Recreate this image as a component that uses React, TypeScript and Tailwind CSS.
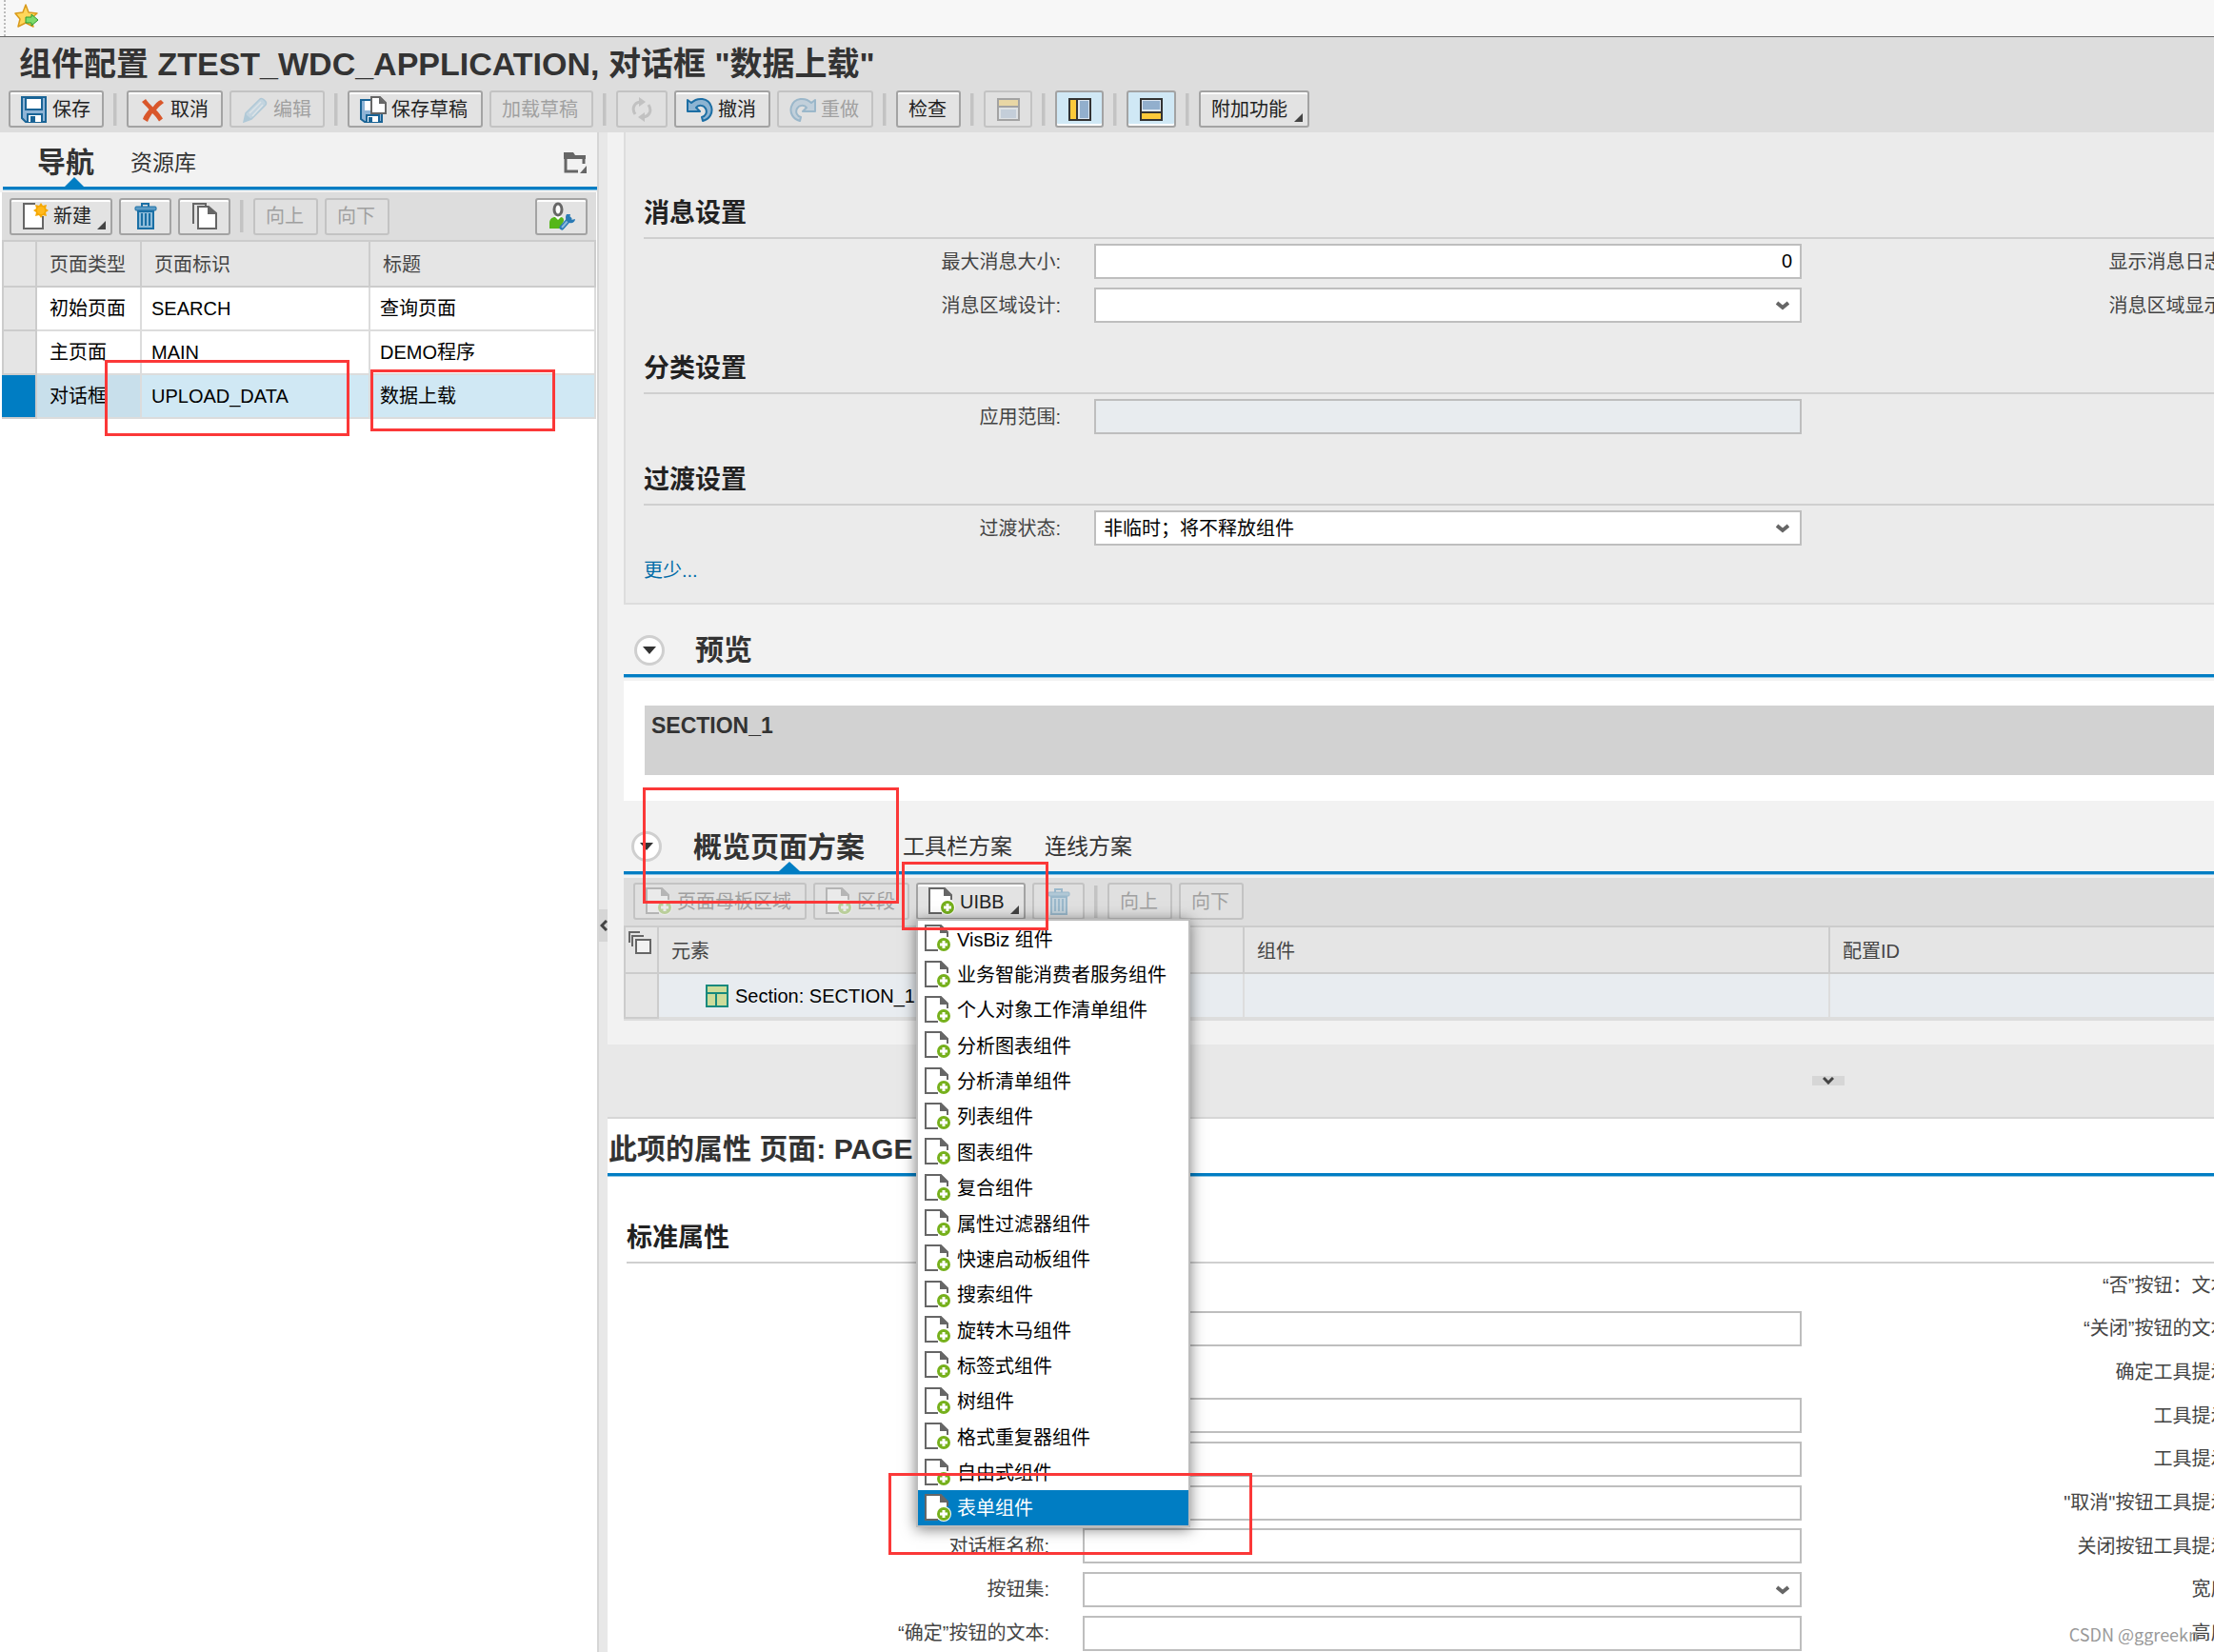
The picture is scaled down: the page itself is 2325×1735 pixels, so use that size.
import type { ReactNode } from "react";
import clsx from "clsx";

type IconProps = { className?: string };

function SaveIcon() {
  return (
    <svg width="28" height="28" viewBox="0 0 28 28" className="shrink-0">
      <path d="M1 1h25v26H5l-4-4z" fill="#8fb4d6" stroke="#1a6496" strokeWidth="2" />
      <rect x="5" y="2" width="17" height="12" fill="#fff" stroke="#1a6496" strokeWidth="2" />
      <path d="M7 27v-8h15v8" fill="#fff" stroke="#1a6496" strokeWidth="2" />
      <rect x="10" y="21" width="5" height="6" fill="#1a6496" />
    </svg>
  );
}

function SaveDraftIcon() {
  return (
    <svg width="28" height="28" viewBox="0 0 28 28" className="shrink-0">
      <path d="M1 4h22v23H5l-4-3z" fill="#8fb4d6" stroke="#1a6496" strokeWidth="2" />
      <rect x="5" y="5" width="9" height="10" fill="#fff" />
      <path d="M7 27v-7h13v7" fill="#fff" stroke="#1a6496" strokeWidth="2" />
      <rect x="9" y="22" width="4" height="5" fill="#1a6496" />
      <path d="M12 1h9l6 6v11H12z" fill="#fff" stroke="#666" strokeWidth="2" />
      <path d="M20 1v7h7z" fill="#666" />
    </svg>
  );
}

function CancelIcon() {
  return (
    <svg width="28" height="28" viewBox="0 0 28 28" className="shrink-0">
      <path
        d="M7 3c2 3 5 6 7.500 8.500C17 8 20 5 23 4l3 3c-3 2-6 5-8 7.500 3 3 5 6 7 9l-4 3c-2-3-4-6-7-8.500-2 3-4 6-5 9l-5-3c1-4 4-7 6.500-10C8 11 5 8 3 6z"
        fill="#d9572b"
      />
    </svg>
  );
}

function EditIcon() {
  return (
    <svg width="28" height="28" viewBox="0 0 28 28" className="shrink-0">
      <path d="M2 27l2-9L19 3c2-2 8 3 6 6L10 24z" fill="#8fc0de" stroke="#5aa0c8" strokeWidth="1.500" />
      <path d="M2 27l2-8 6 5z" fill="#5aa0c8" />
      <path d="M8 18L20 6M11 21L22 9" stroke="#d5eaf5" strokeWidth="1.500" />
    </svg>
  );
}

function RefreshIcon() {
  return (
    <svg width="22" height="26" viewBox="0 0 22 26" className="shrink-0">
      <path d="M4 18C0 12 3 6 9 5" fill="none" stroke="#8a8a8a" strokeWidth="3" />
      <path d="M8 0l7 5-7 5z" fill="#8a8a8a" />
      <path d="M18 8c4 6 1 12-5 13" fill="none" stroke="#8a8a8a" strokeWidth="3" />
      <path d="M14 16l-7 5 7 5z" fill="#8a8a8a" />
    </svg>
  );
}

function UndoIcon({ className }: IconProps) {
  return (
    <svg width="28" height="28" viewBox="0 0 28 28" className={clsx("shrink-0", className)}>
      <path
        d="M1 4l4 3c6-6 18-6 21 4 2 7-2 13-9 15l-1-4c4-1 6-5 4-9-2-4-8-4-10-1l4 4H1z"
        fill="#8db4d2"
        stroke="#1c6ea4"
        strokeWidth="2"
        strokeLinejoin="round"
      />
    </svg>
  );
}

function DocNewIcon() {
  return (
    <svg width="28" height="28" viewBox="0 0 28 28" className="shrink-0">
      <path d="M14 1H2v26h20V14" fill="#fff" stroke="#666" strokeWidth="2" />
      <path d="M14 2l7 12H3V2z" fill="#fff" />
      <path
        d="M20 0l2 3 4-1-1 4 3 2-3 2 1 4-4-1-2 3-2-3-4 1 1-4-3-2 3-2-1-4 4 1z"
        fill="#f5a800"
      />
      <circle cx="20" cy="8" r="4" fill="#ffb81c" />
    </svg>
  );
}

function DocPlusIcon() {
  return (
    <svg width="28" height="29" viewBox="0 0 28 29" className="shrink-0">
      <path d="M1 1h16l6 6v20H1z" fill="#fff" />
      <path d="M24 13V8l-7-7H1v26h13" fill="none" stroke="#666" strokeWidth="2" />
      <path d="M16 0v9h8z" fill="#666" />
      <circle cx="20" cy="21" r="8" fill="#fff" />
      <circle cx="20" cy="21" r="7" fill="#76b01c" />
      <path d="M20 17v8M16 21h8" stroke="#fff" strokeWidth="3" />
    </svg>
  );
}

function TrashIcon() {
  return (
    <svg width="24" height="28" viewBox="0 0 24 28" className="shrink-0">
      <path d="M8 4V1h7v3" fill="none" stroke="#1a6fa5" strokeWidth="2" />
      <rect x="1" y="4" width="22" height="4" rx="1" fill="#5d9cc5" stroke="#1a6fa5" strokeWidth="1" />
      <path d="M4 9h16v18H4z" fill="#8fbcd9" stroke="#1a6fa5" strokeWidth="2" />
      <path d="M8 11v13M12 11v13M16 11v13" stroke="#1a6fa5" strokeWidth="2" />
    </svg>
  );
}

function CopyIcon() {
  return (
    <svg width="26" height="28" viewBox="0 0 26 28" className="shrink-0">
      <path d="M1 22V1h13v3" fill="none" stroke="#666" strokeWidth="2" />
      <path d="M6 4h11l8 7v16H6z" fill="#fff" stroke="#666" strokeWidth="2" />
      <path d="M16 3v9h9z" fill="#666" />
    </svg>
  );
}

function UserToolIcon() {
  return (
    <svg width="28" height="30" viewBox="0 0 28 30" className="shrink-0">
      <path d="M1 28v-6c0-4 3-6 6-6h5c3 0 4 1 4 4l-4 8z" fill="#55b61a" />
      <path d="M6 15h8l-4 4z" fill="#fff" />
      <ellipse cx="10" cy="8" rx="4" ry="6" fill="#fff" stroke="#666" strokeWidth="3" />
      <path d="M14 27l8-9" stroke="#2a7ab5" strokeWidth="5" strokeLinecap="round" />
      <path d="M14 27l7-8" stroke="#8db9dc" strokeWidth="2" />
      <path d="M19 13c-2 3-1 8 3 9 3 1 6-1 6-4l-4 1-2-2 1-4z" fill="#2a7ab5" />
    </svg>
  );
}

function PanelIcon({ kind }: { kind: "top" | "left" | "bottom" }) {
  return (
    <svg width="24" height="24" viewBox="0 0 24 24" className="shrink-0">
      <rect x="1" y="1" width="22" height="22" fill="#dbe6f1" stroke="#333" strokeWidth="2" />
      {kind === "top" && (
        <>
          <rect x="2" y="2" width="20" height="6" fill="#fbc93a" />
          <path d="M1 9h22" stroke="#333" strokeWidth="2" />
          <rect x="4" y="12" width="16" height="9" fill="#92afcd" />
        </>
      )}
      {kind === "left" && (
        <>
          <rect x="2" y="2" width="6" height="20" fill="#fbc93a" />
          <path d="M9 1v22" stroke="#333" strokeWidth="2" />
          <rect x="12" y="3" width="9" height="18" fill="#92afcd" />
        </>
      )}
      {kind === "bottom" && (
        <>
          <rect x="3" y="3" width="18" height="9" fill="#92afcd" />
          <path d="M1 15h22" stroke="#333" strokeWidth="2" />
          <rect x="2" y="16" width="20" height="6" fill="#fbc93a" />
        </>
      )}
    </svg>
  );
}

function StarIcon() {
  return (
    <svg width="26" height="26" viewBox="0 0 26 26">
      <path
        d="M12 1l3 8 9 1-7 6 3 8-8-4-8 4 2-8-5-6 8-1z"
        fill="#ffd75a"
        stroke="#d99a1c"
        strokeWidth="1.500"
        strokeLinejoin="round"
      />
      <path d="M12 14h6v-3l7 6-7 6v-3h-6z" fill="#7ddb6c" stroke="#2e9a2e" />
    </svg>
  );
}

function FolderIcon() {
  return (
    <svg width="24" height="22" viewBox="0 0 24 22">
      <path d="M0 0h10l2 3h11v4H0z" fill="#666" />
      <path d="M15 20H2V5h19v7" fill="none" stroke="#666" strokeWidth="3" />
      <path d="M24 14v8h-7z" fill="#666" />
    </svg>
  );
}

function SelectAllIcon() {
  return (
    <svg width="24" height="24" viewBox="0 0 24 24" className="block">
      <path d="M1 12V1h11M4 16V5h12" fill="none" stroke="#666" strokeWidth="2" />
      <rect x="8" y="9" width="15" height="14" fill="#f2f2f2" stroke="#666" strokeWidth="2" />
    </svg>
  );
}

function SectionIcon() {
  return (
    <svg width="24" height="24" viewBox="0 0 24 24" className="shrink-0">
      <path d="M1 1h22v22H1z" fill="#cddc9a" stroke="#17897d" strokeWidth="2" />
      <path d="M1 9h22M11 9v14" stroke="#17897d" strokeWidth="2" />
    </svg>
  );
}

function ChevronDown({ className }: IconProps) {
  return (
    <svg width="14" height="10" viewBox="0 0 14 10" className={className}>
      <path d="M1 2l6 5 6-5" fill="none" stroke="#666" strokeWidth="4" />
    </svg>
  );
}

type BtnProps = {
  width: string;
  icon?: ReactNode;
  label?: string;
  name?: string;
  disabled?: boolean;
  pressed?: boolean;
  menu?: boolean;
};

function Btn({ width, icon, label, name, disabled, pressed, menu }: BtnProps) {
  return (
    <button
      type="button"
      disabled={disabled}
      aria-label={label ? undefined : name}
      aria-pressed={pressed}
      className={clsx(
        "relative flex h-[39px] shrink-0 items-center gap-[5px] whitespace-nowrap rounded-[3px] border-2",
        width,
        label ? "pl-[11px]" : "justify-center",
        disabled ? "border-[#c3c3c3] text-[#a0a0a0]" : "border-[#a3a3a3] text-[#222]",
        pressed
          ? "bg-[#d0e8f5] shadow-[inset_0_-2px_0_#fff]"
          : disabled
            ? "bg-[#e0e0e0]"
            : "bg-[#e3e3e3] shadow-[inset_0_2px_0_#fff]",
      )}
    >
      {icon && <span className={disabled ? "opacity-35" : undefined}>{icon}</span>}
      {label}
      {menu && (
        <svg width="9" height="9" viewBox="0 0 9 9" className="absolute bottom-1 right-[5px]">
          <path d="M9 0v9H0z" fill="#444" />
        </svg>
      )}
    </button>
  );
}

function Sep() {
  return <span className="mx-[3px] h-[34px] w-1 shrink-0 border-r border-[#d0d0d0] bg-[#c3c3c3]" />;
}

function SectionHeading({ children }: { children: ReactNode }) {
  return (
    <h3 className="border-b-2 border-[#cfcfcf] pb-[7px] pt-px text-[27px] font-bold leading-[36px] text-[#222]">
      {children}
    </h3>
  );
}

const controlClass = "h-[37px] w-full border-2 border-[#bebebe] px-2 text-[20px] text-black";

type RowProps = {
  id: string;
  label?: string;
  hint?: string;
  kind?: "text" | "select" | "none";
  value?: string;
  disabled?: boolean;
  trailing?: string;
  labelWidth: string;
  trailingWidth: string;
};

function FormRow({ id, label, hint, kind = "text", value = "", disabled, trailing, labelWidth, trailingWidth }: RowProps) {
  return (
    <div className="flex items-center text-[#444]">
      <label htmlFor={kind === "none" ? undefined : id} className={clsx("mr-[35px] shrink-0 text-right", labelWidth)}>
        {label}
      </label>
      <div className="relative min-w-0 flex-1">
        {kind === "text" && (
          <input
            id={id}
            type="text"
            defaultValue={value}
            disabled={disabled}
            aria-label={label ? undefined : hint}
            className={clsx(controlClass, "block text-right", disabled ? "bg-[#e8ecef]" : "bg-white")}
          />
        )}
        {kind === "select" && (
          <>
            <select id={id} defaultValue={value} className={clsx(controlClass, "block appearance-none bg-white")}>
              <option value={value}>{value}</option>
            </select>
            <ChevronDown className="pointer-events-none absolute right-[13px] top-[14px]" />
          </>
        )}
      </div>
      <div className="w-[433px] shrink-0">
        <div className={clsx("whitespace-nowrap text-right", trailingWidth)}>{trailing}</div>
      </div>
    </div>
  );
}

const pages = [
  { type: "初始页面", id: "SEARCH", title: "查询页面", selected: false },
  { type: "主页面", id: "MAIN", title: "DEMO程序", selected: false },
  { type: "对话框", id: "UPLOAD_DATA", title: "数据上载", selected: true },
];

const menuItems = [
  "VisBiz 组件",
  "业务智能消费者服务组件",
  "个人对象工作清单组件",
  "分析图表组件",
  "分析清单组件",
  "列表组件",
  "图表组件",
  "复合组件",
  "属性过滤器组件",
  "快速启动板组件",
  "搜索组件",
  "旋转木马组件",
  "标签式组件",
  "树组件",
  "格式重复器组件",
  "自由式组件",
  "表单组件",
];

type PropertyRow = Pick<RowProps, "label" | "hint" | "kind" | "trailing">;

const propertyRows: PropertyRow[] = [
  { kind: "none", trailing: "“否”按钮：文本:" },
  { hint: "标题", trailing: "“关闭”按钮的文本:" },
  { kind: "none", trailing: "确定工具提示:" },
  { hint: "描述", trailing: "工具提示:" },
  { hint: "标识", trailing: "工具提示:" },
  { hint: "类型", trailing: "\"取消\"按钮工具提示:" },
  { label: "对话框名称:", trailing: "关闭按钮工具提示:" },
  { label: "按钮集:", kind: "select", trailing: "宽度:" },
  { label: "“确定”按钮的文本:", trailing: "高度:" },
];

function NavigationPanel() {
  return (
    <aside className="flex w-[627px] shrink-0 flex-col bg-white">
      <div className="bg-[#f2f2f2] pb-[3px] pl-[3px]">
        <div className="flex h-[60px] items-center border-b-[3px] border-[#007dc3] pl-9 pr-[11px] pt-[6px] shadow-[0_1px_0_#8cc4e3]">
          <button type="button" className="relative flex h-full items-center text-[30px] font-bold text-[#333]">
            导航
            <svg width="20" height="10" viewBox="0 0 20 10" className="absolute bottom-0 left-[29px]">
              <path d="M10 0l10 10H0z" fill="#007dc3" />
            </svg>
          </button>
          <button type="button" className="ml-[38px] text-[23px] text-[#333]">
            资源库
          </button>
          <button type="button" aria-label="面板菜单" className="ml-auto">
            <FolderIcon />
          </button>
        </div>
      </div>
      <div className="ml-[2px] flex h-[50px] w-[624px] items-center gap-[7px] bg-[#ddd] pl-2 pr-[9px]">
        <Btn width="w-[108px]" icon={<DocNewIcon />} label="新建" menu />
        <Btn width="w-[55px]" icon={<TrashIcon />} name="删除" />
        <Btn width="w-[55px]" icon={<CopyIcon />} name="复制" />
        <Sep />
        <Btn width="w-[68px]" label="向上" disabled />
        <Btn width="w-[68px]" label="向下" disabled />
        <div className="ml-auto">
          <Btn width="w-[55px]" icon={<UserToolIcon />} name="个性化" />
        </div>
      </div>
      <table className="ml-[2px] w-[624px] table-fixed border-separate border-spacing-0 border-t-2 border-[#ccc] text-left text-black">
        <colgroup>
          <col className="w-[37px]" />
          <col className="w-[110px]" />
          <col className="w-[240px]" />
          <col />
        </colgroup>
        <thead>
          <tr className="h-[48px] bg-[#e5e5e5] text-[#444]">
            <th className="border-2 border-t-0 border-[#ccc]" />
            <th className="border-b-2 border-r-2 border-[#ccc] pl-[13px] pt-[2px] font-normal">页面类型</th>
            <th className="border-b-2 border-r-2 border-[#ccc] pl-[13px] pt-[2px] font-normal">页面标识</th>
            <th className="border-b-2 border-r-2 border-[#ccc] pl-[13px] pt-[2px] font-normal">标题</th>
          </tr>
        </thead>
        <tbody>
          {pages.map((page) => (
            <tr key={page.id} className={clsx("h-[46px]", page.selected ? "bg-[#d0e8f4]" : "bg-white")}>
              <td
                className={clsx(
                  "border-b-2 border-r-2 border-[#ccc]",
                  page.selected ? "bg-[#007dc3]" : "border-l-2 bg-[#e5e5e5]",
                )}
              />
              <td className={clsx("border-b-2 border-r-2 border-[#dcdcdc] pl-[13px]", page.selected && "bg-[#c8dfeb]")}>
                {page.type}
              </td>
              <td className="border-b-2 border-r-2 border-[#dcdcdc] pl-[10px]">{page.id}</td>
              <td className="border-b-2 border-r-2 border-[#dcdcdc] pl-[10px]">{page.title}</td>
            </tr>
          ))}
        </tbody>
      </table>
    </aside>
  );
}

function ExpandButton({ name }: { name: string }) {
  return (
    <button
      type="button"
      aria-label={name}
      className="flex size-8 shrink-0 items-center justify-center rounded-full border-[3px] border-[#cfcfcf] bg-white"
    >
      <svg width="14" height="8" viewBox="0 0 14 8">
        <path d="M0 0h14L7 8z" fill="#333" />
      </svg>
    </button>
  );
}

function ComponentMenu() {
  return (
    <ul
      role="menu"
      className="absolute left-0 top-[38px] z-10 flex h-[639px] w-[288px] flex-col border-2 border-[#bdbdbd] bg-white shadow-[0_2px_14px_rgba(0,0,0,0.5)]"
    >
      {menuItems.map((item, index) => (
        <li key={item} role="none" className="flex min-h-0 flex-1">
          <button
            type="button"
            role="menuitem"
            className={clsx(
              "flex w-full items-center gap-[6px] whitespace-nowrap pl-[7px] text-left",
              index === menuItems.length - 1 ? "bg-[#007dc3] text-white" : "text-black",
            )}
          >
            <DocPlusIcon />
            <span className="pt-[2px]">{item}</span>
          </button>
        </li>
      ))}
    </ul>
  );
}

function GeneralSettings() {
  const shared = { labelWidth: "w-[438px]", trailingWidth: "w-[448px]" };
  return (
    <section className="border-b-2 border-l-2 border-[#ddd] bg-[#ebebeb] pb-[19px] pl-[19px] pt-[66px]">
      <SectionHeading>消息设置</SectionHeading>
      <div className="mt-[5px] flex flex-col gap-[9px]">
        <FormRow id="max-size" label="最大消息大小:" value="0" trailing="显示消息日志:" {...shared} />
        <FormRow id="area-design" label="消息区域设计:" kind="select" trailing="消息区域显示:" {...shared} />
      </div>
      <div className="mt-[29px]">
        <SectionHeading>分类设置</SectionHeading>
      </div>
      <div className="mt-[5px]">
        <FormRow id="scope" label="应用范围:" disabled {...shared} />
      </div>
      <div className="mt-[29px]">
        <SectionHeading>过渡设置</SectionHeading>
      </div>
      <div className="mt-[5px]">
        <FormRow id="transient" label="过渡状态:" kind="select" value="非临时；将不释放组件" {...shared} />
      </div>
      <a href="#less" className="mt-[11px] inline-block leading-[30px] text-[#006ca7]">
        更少...
      </a>
    </section>
  );
}

function PreviewSection() {
  return (
    <section>
      <div className="flex h-[76px] items-center gap-8 border-b-[3px] border-[#007dc3] pl-[11px] pt-[23px] shadow-[0_1px_0_#8cc4e3]">
        <ExpandButton name="折叠预览" />
        <h2 className="text-[30px] font-bold text-[#333]">预览</h2>
      </div>
      <div className="mt-1 bg-white pb-[27px] pl-[22px] pt-[26px]">
        <div className="h-[73px] bg-[#d2d2d2] pl-[7px] pt-[5px] text-[23px] font-bold leading-[32px] text-[#333]">
          SECTION_1
        </div>
      </div>
    </section>
  );
}

function SchemaSection() {
  return (
    <section>
      <div className="flex h-[77px] items-center border-b-[3px] border-[#007dc3] pl-2 pt-[22px] shadow-[0_1px_0_#8cc4e3]">
        <ExpandButton name="折叠方案" />
        <button type="button" className="relative ml-[33px] flex h-full items-center pt-[2px] text-[30px] font-bold text-[#333]">
          概览页面方案
          <svg width="22" height="10" viewBox="0 0 22 10" className="absolute bottom-0 left-[90px]">
            <path d="M11 0l11 10H0z" fill="#007dc3" />
          </svg>
        </button>
        <button type="button" className="ml-10 text-[23px] text-[#333]">
          工具栏方案
        </button>
        <button type="button" className="ml-[34px] text-[23px] text-[#333]">
          连线方案
        </button>
      </div>
      <div className="mt-1 flex h-[50px] items-center gap-[7px] bg-[#ddd] pb-px pl-[10px]">
        <Btn width="w-[182px]" icon={<DocPlusIcon />} label="页面母板区域" disabled />
        <Btn width="w-[101px]" icon={<DocPlusIcon />} label="区段" disabled />
        <div className="relative">
          <Btn width="w-[115px]" icon={<DocPlusIcon />} label="UIBB" menu />
          <ComponentMenu />
        </div>
        <Btn width="w-[55px]" icon={<TrashIcon />} name="删除" disabled />
        <Sep />
        <Btn width="w-[68px]" label="向上" disabled />
        <Btn width="w-[68px]" label="向下" disabled />
      </div>
      <table className="w-full table-fixed border-separate border-spacing-0 border-b-2 border-t-2 border-b-[#ddd] border-t-[#ccc] text-left">
        <colgroup>
          <col className="w-[37px]" />
          <col className="w-[615px]" />
          <col className="w-[615px]" />
          <col />
        </colgroup>
        <thead>
          <tr className="h-[49px] bg-[#e5e5e5] text-[#444]">
            <th className="border-2 border-t-0 border-[#ccc] pl-[3px] align-top">
              <button type="button" aria-label="选择全部" className="mt-1">
                <SelectAllIcon />
              </button>
            </th>
            <th className="border-b-2 border-r-2 border-[#ccc] pl-[13px] pt-[2px] font-normal">元素</th>
            <th className="border-b-2 border-r-2 border-[#ccc] pl-[13px] pt-[2px] font-normal">组件</th>
            <th className="border-b-2 border-[#ccc] pl-[13px] pt-[2px] font-normal">配置ID</th>
          </tr>
        </thead>
        <tbody>
          <tr className="h-[47px] bg-[#e8ecf0] text-black">
            <td className="border-2 border-t-0 border-[#ccc] bg-[#e5e5e5]" />
            <td className="border-b-2 border-r-2 border-[#ddd] pl-[49px]">
              <div className="flex items-center gap-[7px]">
                <SectionIcon />
                Section: SECTION_1
              </div>
            </td>
            <td className="border-b-2 border-r-2 border-[#ddd]" />
            <td className="border-b-2 border-[#ddd]" />
          </tr>
        </tbody>
      </table>
    </section>
  );
}

function PropertiesPanel() {
  return (
    <section className="border-t-2 border-[#d6d6d6] bg-white">
      <h2 className="border-b-[3px] border-[#007dc3] pl-px pt-[7px] text-[30px] font-bold leading-[50px] text-[#333] shadow-[0_1px_0_#8cc4e3]">
        此项的属性 页面: PAGE
      </h2>
      <div className="pl-5 pt-[46px]">
        <SectionHeading>标准属性</SectionHeading>
        <div className="grid h-[411px] auto-rows-fr">
          {propertyRows.map((row, index) => (
            <FormRow
              key={index}
              id={`property-${index}`}
              labelWidth="w-[444px]"
              trailingWidth="w-[455px]"
              {...row}
            />
          ))}
        </div>
      </div>
    </section>
  );
}

const marks = [
  "left-[110px] top-[378px] h-[80px] w-[257px]",
  "left-[389px] top-[388px] h-[65px] w-[194px]",
  "left-[675px] top-[827px] h-[122px] w-[269px]",
  "left-[947px] top-[905px] h-[72px] w-[154px]",
  "left-[933px] top-[1547px] h-[86px] w-[382px]",
];

export default function App() {
  return (
    <div className="relative flex h-screen flex-col overflow-hidden bg-white font-['Liberation_Sans','Noto_Sans_CJK_SC',sans-serif] text-[20px] leading-[30px]">
      <div className="flex h-[39px] shrink-0 items-start border-b border-[#666] bg-[#f7f7f7] pl-1">
        <span className="h-full border-l-2 border-dotted border-[#bbb]" />
        <a href="#favorites" aria-label="收藏" className="ml-[9px] mt-1">
          <StarIcon />
        </a>
      </div>
      <header className="h-[100px] shrink-0 bg-[#ddd] pl-[9px] pt-[7px]">
        <h1 className="whitespace-nowrap pl-[11px] text-[34px] font-bold leading-[42px] text-[#333]">
          组件配置 ZTEST_WDC_APPLICATION, 对话框 "数据上载"
        </h1>
        <div className="mt-[7px] flex items-center gap-[7px]">
          <Btn width="w-[100px]" icon={<SaveIcon />} label="保存" />
          <Sep />
          <Btn width="w-[101px]" icon={<CancelIcon />} label="取消" />
          <Btn width="w-[100px]" icon={<EditIcon />} label="编辑" disabled />
          <Sep />
          <Btn width="w-[142px]" icon={<SaveDraftIcon />} label="保存草稿" />
          <Btn width="w-[109px]" label="加载草稿" disabled />
          <Sep />
          <Btn width="w-[54px]" icon={<RefreshIcon />} name="刷新" disabled />
          <Btn width="w-[101px]" icon={<UndoIcon />} label="撤消" />
          <Btn width="w-[101px]" icon={<UndoIcon className="-scale-x-100" />} label="重做" disabled />
          <Sep />
          <Btn width="w-[68px]" label="检查" />
          <Sep />
          <Btn width="w-[51px]" icon={<PanelIcon kind="top" />} name="页眉" disabled />
          <Sep />
          <Btn width="w-[51px]" icon={<PanelIcon kind="left" />} name="导航区" pressed />
          <Sep />
          <Btn width="w-[52px]" icon={<PanelIcon kind="bottom" />} name="属性区" pressed />
          <Sep />
          <Btn width="w-[116px]" label="附加功能" menu />
        </div>
      </header>
      <div className="flex min-h-0 flex-1">
        <NavigationPanel />
        <div className="flex w-[11px] shrink-0 flex-col justify-center border-l-2 border-[#d6d6d6] bg-[#e8e8e8] pt-[70px]">
          <button type="button" aria-label="折叠导航" className="flex h-[34px] items-center justify-center bg-[#d6d6d6]">
            <svg width="8" height="12" viewBox="0 0 8 12">
              <path d="M7 1L2 6l5 5" fill="none" stroke="#444" strokeWidth="3" />
            </svg>
          </button>
        </div>
        <main className="min-w-0 flex-1 overflow-hidden">
          <div className="bg-[#f2f2f2] pb-[25px] pl-[17px]">
            <GeneralSettings />
            <PreviewSection />
            <SchemaSection />
          </div>
          <div className="flex h-[76px] items-center bg-[#e8e8e8] pl-[75%]">
            <button type="button" aria-label="折叠属性" className="flex h-[10px] w-[34px] items-center justify-center bg-[#d6d6d6]">
              <svg width="12" height="8" viewBox="0 0 12 8">
                <path d="M1 1l5 5 5-5" fill="none" stroke="#444" strokeWidth="3" />
              </svg>
            </button>
          </div>
          <PropertiesPanel />
        </main>
      </div>
      {marks.map((mark) => (
        <div key={mark} className={clsx("pointer-events-none absolute z-20 border-[3px] border-[#fb3838]", mark)} />
      ))}
      <div className="pointer-events-none absolute bottom-1 right-4 font-['Noto_Sans_CJK_SC',sans-serif] text-[18px] text-[#999]">
        CSDN @ggreekn
      </div>
    </div>
  );
}
